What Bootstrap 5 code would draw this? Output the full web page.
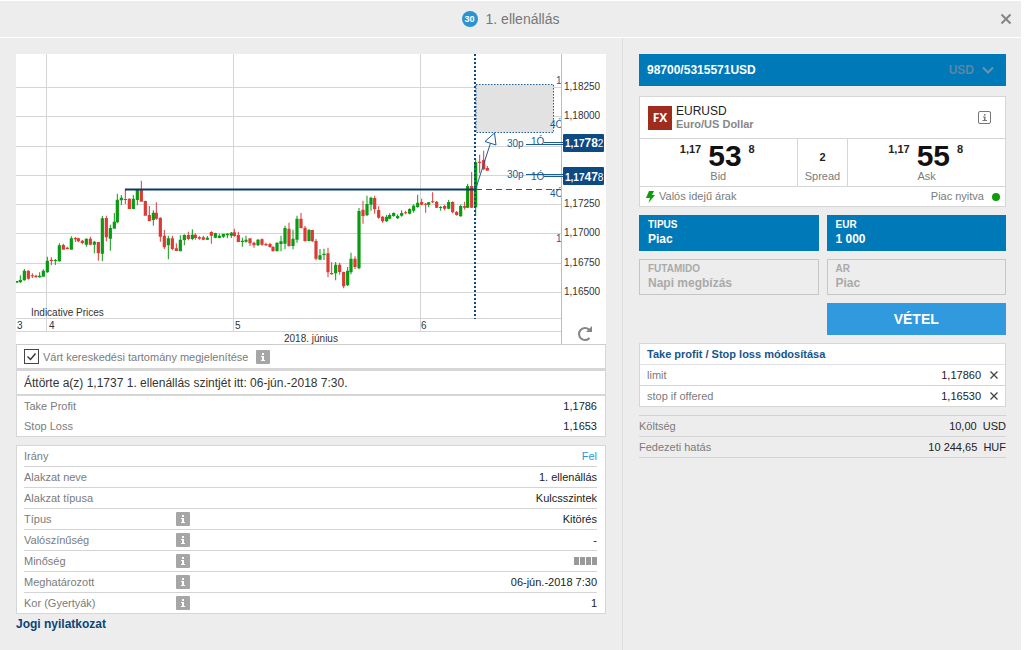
<!DOCTYPE html>
<html lang="hu">
<head>
<meta charset="utf-8">
<meta name="viewport" content="width=device-width, initial-scale=1">
<title>1. ellenállás</title>
<link href="https://cdn.jsdelivr.net/npm/bootstrap@5.3.0/dist/css/bootstrap.min.css" rel="stylesheet">
<style>
  body { font: 11px/20px "Liberation Sans", Arial, sans-serif; color: #222; background: #fff; }
  .app { background: #ededed; margin-right: 3px; border-top: 1px solid #fff; }
  .titlebar { height: 37px; border-bottom: 1px solid #fff; font-size: 14px; color: #777; }
  .count { width: 16px; height: 16px; font-size: 9px; line-height: 16px; color: #fff; background: #2c93d1; }
  .close-x { right: 5px; top: 8px; width: 20px; height: 20px; }
  .plain { border: 0; background: none; padding: 0; line-height: 0; }
  .pane-left { flex: 590 1 0; min-width: 0; padding: 16px; padding-bottom: 8px; }
  .pane-right { flex: 367 1 0; min-width: 0; padding: 16px; padding-right: 15px; border-left: 1px solid #dcdcdc; }
  .sheet { background: #fff; border: 1px solid #d6d6d6; }
  .muted { color: #7b7b7b; }
  .chart { display: block; width: 100%; background: #fff; }
  .chart text { font-family: "Liberation Sans", Arial, sans-serif; }
  .tick { width: 15px; height: 15px; appearance: none; border: 1px solid #444; background: #fff; margin: 0; }
  .tick:checked { background: #fff url("data:image/svg+xml,%3Csvg xmlns='http://www.w3.org/2000/svg' viewBox='0 0 13 13'%3E%3Cpath d='M2.5 6.5l3 3 5-6' fill='none' stroke='%23333' stroke-width='1.4'/%3E%3C/svg%3E") center / 13px 13px no-repeat; }
  .info { display: block; width: 14px; height: 14px; }
  .option-row { height: 25px; padding: 0 7px; gap: 4px; border-top-color: #ccc; }
  .message { height: 27px; font-size: 12px; line-height: 24px; padding: 0 7px; color: #333; border-top: 2px solid #d6d6d6; border-bottom-width: 2px; }
  .rows { width: 100%; }
  .rows th { font-weight: 400; text-align: left; color: #7b7b7b; padding: 0; }
  .rows td { padding: 0; text-align: right; }
  .lined { line-height: 18px; }
  .lined th, .lined td { vertical-align: middle; }
  .lined tr { height: 21px; }
  .lined tr + tr { border-top: 1px solid #d4d4d4; }
  .details tr:first-child, .costs tr:first-child, .stops thead tr { height: 20px; }
  .levels { padding: 0 8px 0 7px; }
  .details { padding: 0 8px 0 7px; margin-top: 8px; }
  .details .c-name { width: 152px; }
  .details td.c-info { text-align: left; }
  .up { color: #2e96dc; }
  .quality { gap: 1px; }
  .quality i { width: 5px; height: 8px; background: #999; }
  .legal { font-size: 12px; font-weight: 700; color: #0b4478; text-decoration: none; }
  .account { height: 32px; padding: 0 12px 0 8px; border: 0; background: #0079b9; color: #fff; font-size: 12px; font-weight: 700; }
  .account .cur { color: #5b87a5; gap: 8px; }
  .quote { margin-top: 10px; height: 111px; }
  .quote-head { height: 42px; padding: 0 14px 0 8px; gap: 4px; border-bottom: 1px solid #d6d6d6; }
  .fx { width: 24px; height: 24px; background: #a02c1f; color: #fff; font: 700 12px/24px "Open Sans", sans-serif; text-align: center; }
  .sym { font-size: 12px; line-height: 13px; }
  .sub { font-size: 11px; line-height: 13px; font-weight: 700; color: #888; }
  .prices { height: 48px; border-bottom: 1px solid #d6d6d6; text-align: center; }
  .prices > * { min-width: 0; }
  .side { flex: 157 1 0; }
  .spread { flex: 50 1 0; border: solid #d6d6d6; border-width: 0 1px; padding-top: 10px; }
  .prices .nums { height: 31px; gap: 7px; padding-right: 2px; }
  .nums small { font-size: 11px; font-weight: 700; line-height: 20px; }
  .nums b { font-size: 30px; line-height: 34px; color: #111; }
  .cap { line-height: 12px; color: #7b7b7b; }
  .spread b { display: block; line-height: 16px; }
  .spread .cap { margin-top: 5px; }
  .quote-foot { height: 19px; padding: 0 5px 0 6px; line-height: 19px; }
  .dot { width: 8px; height: 8px; background: #0b9f0b; }
  .order { display: grid; grid-template-columns: 1fr 1fr; gap: 8px; margin-top: 8px; }
  .field { height: 36px; padding: 2px 8px; background: #0079b9; border: 1px solid #0079b9; color: #fff; font-weight: 700; }
  .field label { display: block; font-size: 10px; line-height: 13px; }
  .field input, .field select { display: block; width: 100%; appearance: none; border: 0; padding: 0; height: 16px; background: none; color: inherit; font: inherit; font-size: 12px; line-height: 16px; opacity: 1; }
  .field.off { background: #ededed; border-color: #c6c6c6; color: #aaa; }
  .buy { grid-column: 2; height: 32px; border: 0; background: #3199dd; color: #fff; font-size: 14px; font-weight: 700; }
  .stops { margin-top: 8px; padding: 0; }
  .stops th, .costs th { white-space: nowrap; }
  .stops tr > :first-child { padding-left: 7px; }
  .stops tr > :last-child { padding-right: 7px; }
  .stops thead th { color: #14568c; font-weight: 700; }
  .stops .c-x { width: 24px; }
  .stops .plain { display: block; margin-left: auto; }
  .costs { margin-top: 8px; border: solid #d2d2d2; border-width: 1px 0; }
</style>
</head>
<body>
<div class="app min-vh-100 d-flex flex-column">
  <header class="titlebar d-flex align-items-center justify-content-center position-relative gap-2">
    <span class="count rounded-circle text-center fw-bold">30</span>
    <span>1. ellenállás</span>
    <button class="plain close-x position-absolute" aria-label="Bezárás">
      <svg width="20" height="20"><path d="M5.500 5.500l9 9M14.500 5.500l-9 9" stroke="#858585" stroke-width="2"/></svg>
    </button>
  </header>

  <div class="d-flex flex-grow-1">
    <main class="pane-left">
      <svg class="chart" viewBox="0 0 590 290" role="img" aria-label="EURUSD árfolyam">
        <g stroke="#d5d5d5" fill="none">
          <path d="M0 33.500H545M0 62.500H545M0 92.500H545M0 121.500H545M0 150.500H545M0 179.500H545M0 209.500H545M0 238.500H545M0 264.500H545M0 277.500H545"/>
          <path d="M30.500 0V277M217.500 0V277M404.500 0V277"/>
          <path d="M545.500 0V290" stroke="#bbb"/>
        </g>
        <rect x="460" y="30.500" width="77.500" height="48" fill="#e2e2e2" stroke="#1d5c93" stroke-dasharray="1.500 1.500"/>
        <g id="candles"></g>
        <g stroke="#1d5c93" fill="none">
          <path d="M109 135.500H460" stroke="#083a6b" stroke-width="2"/>
          <path d="M460 135.500H545" stroke-dasharray="6 4"/>
          <path d="M459 0V265" stroke="#0b4a83" stroke-width="2" stroke-dasharray="2 2"/>
          <path d="M460 134L474.500 89"/>
          <path d="M478.500 79L469 87.500L480 91z" fill="#fff"/>
          <path d="M510 90.500H547M528 88.500H547M510 120.500H547M528 122.500H547"/>
        </g>
        <g font-size="10" fill="#1d5c93">
          <text x="491" y="93">30p</text><text x="515" y="91">1Ó</text>
          <text x="491" y="124">30p</text><text x="515" y="126">1Ó</text>
          <svg width="545" height="290">
            <text x="540" y="30">1</text><text x="534" y="74">4Ó</text>
            <text x="534" y="143">4Ó</text><text x="540" y="188">1</text>
          </svg>
        </g>
        <g font-size="10" fill="#333">
          <text x="548" y="36">1,18250</text><text x="548" y="65">1,18000</text>
          <text x="548" y="153">1,17250</text><text x="548" y="182">1,17000</text>
          <text x="548" y="212">1,16750</text><text x="548" y="241">1,16500</text>
          <text x="15" y="262">Indicative Prices</text>
          <text x="1" y="275">3</text><text x="33" y="275">4</text>
          <text x="219" y="275">5</text><text x="405" y="275">6</text>
          <text x="268" y="288">2018. június</text>
        </g>
        <g fill="#0b4a83">
          <rect x="547" y="80" width="41" height="18" rx="1"/><rect x="547" y="113" width="41" height="18" rx="1"/>
        </g>
        <g fill="#fff" font-weight="bold" font-size="10">
          <text x="549" y="93">1,17<tspan font-size="12">78</tspan><tspan font-weight="normal">2</tspan></text>
          <text x="549" y="127">1,17<tspan font-size="12">47</tspan><tspan font-weight="normal">8</tspan></text>
        </g>
        <path d="M573 275.500A6 6 0 1 0 573.500 284" fill="none" stroke="#858585" stroke-width="2"/>
        <path d="M576 272v6h-6z" fill="#858585"/>
      </svg>

      <div class="sheet option-row d-flex align-items-center">
        <input class="tick" type="checkbox" id="range" checked>
        <label for="range" class="muted">Várt kereskedési tartomány megjelenítése</label>
        <button class="plain ms-1" aria-label="Információ"><svg class="info" viewBox="0 0 14 14"><use href="#i-info"/></svg></button>
      </div>
      <div class="sheet message">Áttörte a(z) 1,1737 1. ellenállás szintjét itt: 06-jún.-2018 7:30.</div>
      <div class="sheet levels border-top-0">
        <table class="rows">
          <tr><th>Take Profit</th><td>1,1786</td></tr>
          <tr><th>Stop Loss</th><td>1,1653</td></tr>
        </table>
      </div>

      <div class="sheet details">
        <table class="rows lined">
          <tr><th class="c-name">Irány</th><td class="c-info"></td><td class="up">Fel</td></tr>
          <tr><th>Alakzat neve</th><td class="c-info"></td><td>1. ellenállás</td></tr>
          <tr><th>Alakzat típusa</th><td class="c-info"></td><td>Kulcsszintek</td></tr>
          <tr><th>Típus</th><td class="c-info"><svg class="info" viewBox="0 0 14 14"><use href="#i-info"/></svg></td><td>Kitörés</td></tr>
          <tr><th>Valószínűség</th><td class="c-info"><svg class="info" viewBox="0 0 14 14"><use href="#i-info"/></svg></td><td>-</td></tr>
          <tr><th>Minőség</th><td class="c-info"><svg class="info" viewBox="0 0 14 14"><use href="#i-info"/></svg></td><td><div class="quality d-flex justify-content-end"><i></i><i></i><i></i><i></i></div></td></tr>
          <tr><th>Meghatározott</th><td class="c-info"><svg class="info" viewBox="0 0 14 14"><use href="#i-info"/></svg></td><td>06-jún.-2018 7:30</td></tr>
          <tr><th>Kor (Gyertyák)</th><td class="c-info"><svg class="info" viewBox="0 0 14 14"><use href="#i-info"/></svg></td><td>1</td></tr>
        </table>
      </div>
      <a href="#" class="legal">Jogi nyilatkozat</a>
    </main>

    <aside class="pane-right">
      <button class="account w-100 d-flex align-items-center justify-content-between">
        <span>98700/5315571USD</span>
        <span class="cur d-flex align-items-center">USD
          <svg width="12" height="8"><path d="M1 1.500l5 5 5-5" fill="none" stroke="#6f93ab" stroke-width="2"/></svg></span>
      </button>

      <section class="sheet quote">
        <div class="quote-head d-flex align-items-center">
          <div class="fx">FX</div>
          <div class="flex-grow-1"><div class="sym">EURUSD</div><div class="sub">Euro/US Dollar</div></div>
          <button class="plain" aria-label="Instrumentum adatai"><svg width="13" height="13"><rect x=".5" y=".5" width="12" height="12" rx="1.500" fill="none" stroke="#777"/><path d="M6 3h1.500v1.500H6zM5 5.500h2.500V9H9v1H4.500V9H6V6.500H5z" fill="#777"/></svg></button>
        </div>
        <div class="prices d-flex">
          <div class="side">
            <div class="nums d-flex justify-content-center"><small>1,17</small><b>53</b><small>8</small></div>
            <div class="cap">Bid</div>
          </div>
          <div class="spread"><b>2</b><div class="cap">Spread</div></div>
          <div class="side">
            <div class="nums d-flex justify-content-center"><small>1,17</small><b>55</b><small>8</small></div>
            <div class="cap">Ask</div>
          </div>
        </div>
        <div class="quote-foot muted d-flex align-items-center">
          <svg class="me-1" width="9" height="12"><path d="M3 0h5L6 4h3L2.500 12l1.500-5H0z" fill="#0b9f0b"/></svg>
          <span class="flex-grow-1">Valós idejű árak</span>
          <span class="me-2">Piac nyitva</span><span class="dot rounded-circle"></span>
        </div>
      </section>

      <form class="order">
        <div class="field"><label for="kind">TIPUS</label><select id="kind"><option>Piac</option></select></div>
        <div class="field"><label for="size">EUR</label><input id="size" value="1 000"></div>
        <div class="field off"><label for="term">FUTAMIDO</label><select id="term" disabled><option>Napi megbízás</option></select></div>
        <div class="field off"><label for="price">AR</label><input id="price" value="Piac" disabled></div>
        <button type="button" class="buy">VÉTEL</button>
      </form>

      <div class="sheet stops">
        <table class="rows lined">
          <thead><tr><th colspan="3">Take profit / Stop loss módosítása</th></tr></thead>
          <tbody>
            <tr class="border-top"><th>limit</th><td>1,17860</td><td class="c-x"><button class="plain" aria-label="Limit törlése"><svg width="8" height="8"><use href="#i-x"/></svg></button></td></tr>
            <tr><th>stop if offered</th><td>1,16530</td><td class="c-x"><button class="plain" aria-label="Stop törlése"><svg width="8" height="8"><use href="#i-x"/></svg></button></td></tr>
          </tbody>
        </table>
      </div>
      <div class="costs">
        <table class="rows lined">
          <tr><th>Költség</th><td>10,00 &nbsp;USD</td></tr>
          <tr><th>Fedezeti hatás</th><td>10 244,65 &nbsp;HUF</td></tr>
        </table>
      </div>
    </aside>
  </div>
</div>

<svg class="d-none">
  <symbol id="i-info" viewBox="0 0 14 14"><rect width="14" height="14" rx="1" fill="#a6a6a6"/><path d="M6 3h2v2H6zM5 6h3v4h1v1H5v-1h1V7H5z" fill="#fff"/></symbol>
  <symbol id="i-x" viewBox="0 0 8 8"><path d="M.5 .5l7 7M7.500 .5l-7 7" stroke="#444" stroke-width="1.300"/></symbol>
</svg>

<script src="https://cdn.jsdelivr.net/npm/bootstrap@5.3.0/dist/js/bootstrap.bundle.min.js"></script>
<script>
  // Each candle: direction (g up, r down), x, high, low, body top, body bottom, in thirds of a chart unit.
  const candles = `g50,393,398,393,398 g61,376,398,390,397 g73,357,392,362,391 r85,361,389,362,386 r97,370,384,376,379 r108,374,384,377,381
g119,367,383,377,382 g130,358,380,362,380 g142,320,368,332,367 r154,322,346,329,333 g166,327,345,330,333 g178,280,335,286,334
r190,281,299,285,299 r202,290,298,293,297 g214,259,299,265,299 r226,261,276,264,268 r235,263,277,265,274 r247,269,283,272,279
g259,265,290,266,284 r271,260,286,266,284 g283,272,310,275,284 r295,275,332,276,310 g307,198,334,205,311 r319,197,274,204,262
g331,224,302,234,266 g343,189,236,215,236 g352,131,220,149,217 g364,135,165,143,151 r376,117,162,147,150 r388,145,177,146,177
g400,135,178,146,177 g412,118,166,120,150 r424,92,155,120,155 r436,152,197,153,197 r448,168,214,195,213 g460,181,227,188,210
r469,157,209,188,206 r481,202,275,203,260 r493,240,297,257,292 g505,257,328,265,286 r517,257,301,265,297 r529,280,303,295,303
g541,256,304,269,304 g553,253,286,255,270 r565,245,271,255,267 g577,238,271,254,267 r586,250,269,254,264 r598,258,269,262,266
r610,257,271,262,269 g622,258,270,263,269 r634,244,281,246,257 g646,248,265,249,263 g658,251,265,257,264 g670,251,264,251,260
g682,249,265,251,256 g694,246,264,248,257 r703,236,260,247,258 r715,245,276,255,276
g727,263,290,272,276 g738,257,278,269,275 r750,265,288,265,280 r762,275,293,278,286 g774,267,288,269,286 r786,265,287,268,284
r798,278,288,282,286 r810,278,293,282,291 r819,288,305,291,303 g831,277,305,278,303 g843,257,304,274,282 g855,227,298,234,281
r867,218,290,236,288 g879,239,298,266,288 g891,197,278,206,269 r903,189,235,206,235 r915,228,275,233,273 g927,238,274,239,273
r937,239,276,240,274 r948,267,331,273,326 g960,297,329,316,329 g972,296,330,311,315 r984,293,382,310,367 r995,337,374,369,373
g1007,336,391,344,370 r1019,338,374,344,366 r1031,365,415,366,409 g1043,351,408,362,406 g1053,308,373,326,367 r1065,319,357,326,351
g1077,174,358,183,355 r1089,152,221,179,198 g1101,137,198,162,196 g1113,140,182,143,164 r1124,137,191,144,178 r1136,169,206,180,203
r1148,198,218,200,214 g1160,194,217,200,214 g1169,190,208,195,206 g1181,187,200,189,198 g1193,193,207,198,205 g1205,181,200,189,197
r1217,182,193,187,190 g1229,175,193,177,191 g1241,163,188,167,182 g1253,134,173,158,171 r1265,146,166,156,164 r1277,159,188,161,164
g1286,156,172,157,164 r1298,127,159,154,157 r1310,153,174,155,173 g1322,168,182,171,174 r1334,164,181,168,176 g1346,150,178,156,176
r1358,154,190,156,187 r1370,183,197,186,195 g1382,164,200,168,199 r1394,155,179,168,173 g1403,101,174,108,173 r1415,66,174,108,173
g1427,27,198,37,172 r1439,14,70,35,39 r1451,2,60,30,58 r1462,48,62,54,62`;
  const ink = { g: '#0a9b12', r: '#dc3b35' };
  document.getElementById('candles').innerHTML = candles.split(/\s+/).map(c => {
    const [x, hi, lo, top, bot] = c.slice(1).split(',').map(Number);
    const X = x / 3 - 16, Y = v => 96 + v / 3;
    return `<path fill="${ink[c[0]]}" d="M${X - .5} ${Y(hi)}h1V${Y(lo)}h-1zM${X - 1.6} ${Y(top)}h3.200V${Y(bot)}h-3.200z"/>`;
  }).join('');
</script>
</body>
</html>
